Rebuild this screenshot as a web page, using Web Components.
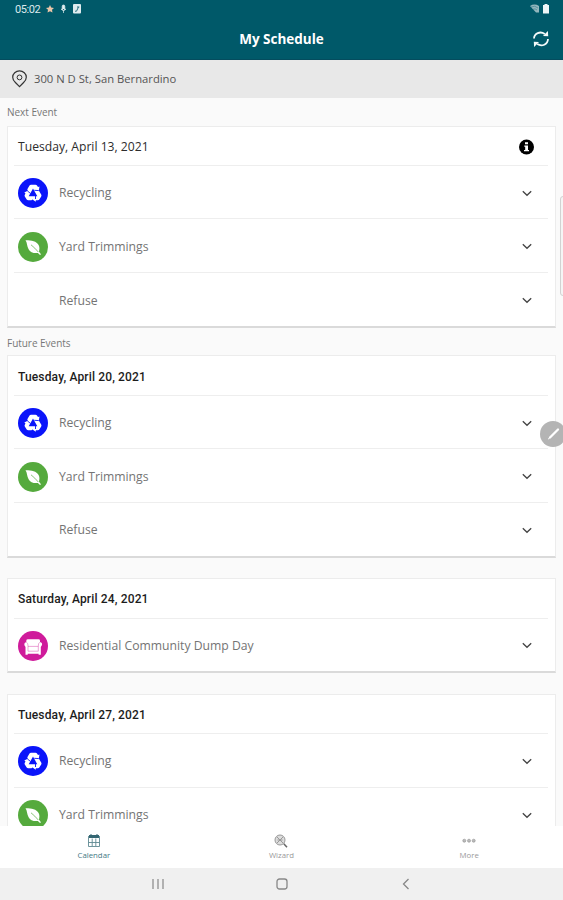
<!DOCTYPE html>
<html lang="en"><head><meta charset="utf-8"><title>My Schedule</title>
<style>html,body{margin:0;height:100%;overflow:hidden;background:#fafafa}</style></head>
<body><schedule-app></schedule-app>
<script>
const glyphs = {
  recycle: `<svg viewBox="0 0 30 30"><circle cx="15" cy="15" r="15" fill="#0a14fa"/><path d="M11.500 7.500Q12 6.700 13 6.700H17.500Q18.500 6.700 19 7.500L20 9 21.500 8.500 20.800 12.600 23.300 16.700Q23.700 17.500 23.200 18.400L21.300 21.500Q20.800 22.300 19.800 22.300H17.800V23.800L14.500 21.500 13.500 22.300H10.200Q9.200 22.300 8.700 21.500L6.800 18.400Q6.300 17.500 6.800 16.700L7.500 15.500 6.300 14.600 9.700 12.800 9.300 11.200Z" fill="#fff"/><path d="M15 10.500 19.300 18.300H10.700Z" fill="#0a14fa"/><path d="M16.300 12.300 20.800 12.600M17.500 18V21M12.500 15.500 9.300 12.800" stroke="#0a14fa" stroke-width=".9"/></svg>`,
  leaf: `<svg viewBox="0 0 30 30"><circle cx="15" cy="15" r="15" fill="#55aa3d"/><path d="M7.500 8.300C13 8.200 18.500 9.200 20.600 13c1.300 2.400.8 4.600.4 6.700l2 2.600-1 .8-2.100-2.100c-3.900.5-7.700-.5-9.300-3.800C8.900 14.300 9.300 11 7.500 8.300Z" fill="#fff"/><path d="M13 12.800Q17 16 20.300 20" fill="none" stroke="#55aa3d" stroke-width=".7"/></svg>`,
  chair: `<svg viewBox="0 0 30 30"><circle cx="15" cy="15" r="15" fill="#cf1b9b"/><path d="M8.300 11V9.700Q8.300 8.300 10 8.300H20.500Q22 8.300 22 9.700V11Q24.500 11.500 24 14L22.800 16V23.700H20.600V22.700H9.700V23.700H7.500V16L6.300 14Q6 11.500 8.300 11Z" fill="#fff"/><path d="M8.400 11.200Q10.300 12.200 10 15.400H20.300Q20 12.200 21.900 11.200M10 15.400V20.200H20.300V15.400" fill="none" stroke="#cf1b9b" stroke-width=".4"/></svg>`,
  none: ''
};
const define = (name, html) => {
  const t = document.createElement('template');
  t.innerHTML = html;
  customElements.define(name, class extends HTMLElement {
    constructor() { super(); this.attachShadow({mode:'open'}).append(t.content.cloneNode(true)); }
  });
};

define('status-bar', `<style>
:host{display:flex;align-items:center;height:18px;padding:0 13px 0 15px;color:#dce9ec;font:11px/18px Roboto,sans-serif}
.t{width:31px;letter-spacing:-.4px;padding-top:1px}svg{display:block}.sp{flex:1}
</style><span class="t">05:02</span>
<svg width="37" height="10" viewBox="0 0 37 10"><path d="m4 1 1.2 2.500L8 3.900 6 5.800l.5 2.700L4 7.300 1.500 8.500 2 5.800 0 3.900l2.800-.4Z" fill="#e9c5a8"/><path d="M17.500 1a1.300 1.300 0 0 1 1.300 1.300V5a1.300 1.300 0 0 1-2.600 0V2.300A1.300 1.300 0 0 1 17.500 1ZM15 5q2.500 3 5 0M17.500 6.500V9" fill="#e4eff1" stroke="#e4eff1" stroke-width=".7"/><rect x="27" y="0" width="8" height="9.500" rx="1" fill="#dfecef"/><path d="M29 7.200h1.500L32.500 3M31 3h2.300" stroke="#2b7180" fill="none"/></svg>
<span class="sp"></span>
<svg width="21" height="10" viewBox="0 0 21 10"><path d="M1 2Q5.500-.8 10 2V8.500L7 8.500Z" fill="#93b7be"/><path d="M2 3Q6 1 9 4M4 5.300Q6 4 8 6" fill="none" stroke="#005969" stroke-width=".4"/><path d="M14 1H15.500V0h3V1H20V9.500H14Z" fill="#eef6f7"/></svg>`);

define('title-bar', `<style>
:host{display:grid;grid-template-columns:44px 1fr 44px;align-items:center;height:42px;color:#fff;font:700 13.500px/42px "Open Sans",sans-serif;text-align:center;box-sizing:border-box;border-bottom:1px solid #044c5e}
svg{display:block;margin:0 auto}</style><span></span><span><slot></slot></span>
<svg width="18" height="18" viewBox="0 0 18 18" fill="none" stroke="#f4fafa" stroke-width="1.800"><path d="M2 8.500C2.300 3.500 8 .8 12.800 3.900M16 9C15.700 14.500 10 17 5.200 14.100"/><path d="M11 6 16.200 6.300 15.900 1ZM7 12 1.800 11.700 2.100 17Z" fill="#f4fafa" stroke="none"/></svg>`);

define('address-bar', `<style>
:host{display:flex;align-items:center;box-sizing:border-box;height:38px;padding:0 12px 0;gap:7px;background:#e8e8e8;color:#555;font:11.250px/36px "Open Sans",sans-serif}
</style><svg width="15" height="18" viewBox="0 0 15 18" fill="none" stroke="#333"><path d="M7.500 16.700 3.400 12.500Q.7 10.100.7 7.300A6.700 6.300 0 0 1 14.300 7.300Q14.300 10.100 11.600 12.500Z" stroke-width="1.200"/><circle cx="7.500" cy="7.400" r="2.400"/></svg><span><slot></slot></span>`);

define('section-label', `<style>:host{display:block;height:27.500px;padding-left:7px;font:10px/29px "Open Sans",sans-serif;letter-spacing:-.03px;color:#777}</style><slot></slot>`);

define('event-card', `<style>
:host{display:block;box-sizing:border-box;margin:0 7px 0 7px;padding:0 7px 0 6px;background:#fff;border:1px solid #ececec;border-bottom:2px solid #dadada}
header{display:flex;justify-content:space-between;align-items:center;height:38.300px;padding:2px 14px 0 4px;box-sizing:border-box;color:#2d2d2d;font:12.150px/36px "Open Sans",sans-serif}
:host([future]) header{font:500 12px/36px Roboto,sans-serif;letter-spacing:.15px;color:#1c1c1c}
:host([future]) svg{display:none}
</style><header><slot name="date"></slot><svg width="15" height="16" viewBox="0 0 15 16"><circle cx="7.500" cy="8" r="7.500" fill="#000"/><path d="M6 3.200H9V5.300H6ZM5.300 6.500H9V11H10V12.300H5V11H6.200V7.800H5.300Z" fill="#fff"/></svg></header><slot></slot>`);

customElements.define('event-row', class extends HTMLElement {
  connectedCallback() {
    this.attachShadow({mode:'open'}).innerHTML = `<style>
:host{display:grid;grid-template-columns:30px 1fr 10px;column-gap:11px;align-items:center;box-sizing:border-box;height:53.700px;padding:2px 16px 0 4px;border-top:1px solid #eee;color:#747474;font:12.200px/20px "Open Sans",sans-serif}
i{width:30px;height:30px}svg{display:block}i svg{width:30px;height:30px}</style>
<i>${glyphs[this.getAttribute('icon')]}</i><span><slot></slot></span>
<svg width="10" height="7" viewBox="0 0 10 7" fill="none" stroke="#444" stroke-width="1.300"><path d="M.8 1.200 5 5.300 9.200 1.200"/></svg>`;
  }
});

define('tab-bar', `<style>
:host{display:grid;grid-template-columns:repeat(3,1fr);height:42px;background:#fff;color:#999;font:7.800px/10px "Open Sans",sans-serif}
div{display:flex;flex-direction:column;align-items:center;padding-top:8px;gap:2px}.on{color:#457984}svg{display:block}
</style><div class="on"><svg width="14" height="14" viewBox="0 0 14 14"><path d="M2 1H12V4H2Z" fill="#356773"/><path d="M1.500 2V12.500H12.500V2M1.500 8.500H12.500M5.200 4.500V12M8.800 4.500V12" fill="none" stroke="#5f8992" stroke-width=".9"/><path d="M4 0V2M10 0V2" stroke="#356773"/></svg><span>Calendar</span></div>
<div><svg width="14" height="14" viewBox="0 0 14 14" fill="none" stroke="#999"><circle cx="6" cy="6" r="5" fill="#ddd"/><path d="M3 3 9 9M9 3 3 9M3.500 6H8.500"/><path d="M9.800 9.800 13 13.300" stroke="#666" stroke-width="1.500"/></svg><span>Wizard</span></div>
<div><svg width="14" height="14" viewBox="0 0 14 14" fill="#bbb" stroke="#999" stroke-width=".7"><circle cx="2.300" cy="6.700" r="1.500"/><circle cx="7" cy="6.700" r="1.500"/><circle cx="11.700" cy="6.700" r="1.500"/></svg><span>More</span></div>`);

define('system-nav', `<style>:host{display:flex;justify-content:center;align-items:center;gap:112px;height:32px;padding-top:0;background:#f0f0f0}svg{display:block}</style>
<svg width="12" height="12" viewBox="0 0 12 12" stroke="#888" stroke-width="1.200"><path d="M1 1V11M6 1V11M11 1V11"/></svg>
<svg width="12" height="12" viewBox="0 0 12 12" fill="none" stroke="#888" stroke-width="1.300"><rect x="1" y="1" width="10" height="10" rx="2.500"/></svg>
<svg width="12" height="12" viewBox="0 0 12 12" fill="none" stroke="#888" stroke-width="1.300"><path d="M8.500 1 3.500 6 8.500 11"/></svg>`);

define('floating-pen', `<style>:host{display:block;position:absolute;left:540px;top:421px;width:26px;height:26px;border-radius:50%;background:#b4b4b4}svg{display:block}</style>
<svg width="26" height="26" viewBox="0 0 26 26" stroke="#fff" stroke-linecap="round"><path d="M10 16.500 18 8.500" stroke-width="2.300"/><path d="M8.300 18 10 16.500" stroke-width="1"/></svg>`);
define('scroll-handle', `<style>:host{display:block;position:absolute;box-sizing:border-box;left:560px;top:196px;width:6px;height:100px;border:1px solid #d2d2d2;border-radius:3px;background:#f5f5f5}</style>`);

define('schedule-app', `<style>
:host{display:flex;flex-direction:column;position:relative;width:563px;height:900px;overflow:hidden;background:#fafafa}
.top{background:#005969}main{flex:1;min-height:0;overflow:hidden}
.gap{margin-top:20.500px}
.l2{line-height:30px}
</style>
<div class="top"><status-bar></status-bar><title-bar>My Schedule</title-bar></div>
<address-bar>300 N D St, San Bernardino</address-bar>
<main>
<section-label>Next Event</section-label>
<event-card><span slot="date">Tuesday, April 13, 2021</span><event-row icon="recycle">Recycling</event-row><event-row icon="leaf">Yard Trimmings</event-row><event-row icon="none">Refuse</event-row></event-card>
<section-label class="l2">Future Events</section-label>
<event-card future><span slot="date">Tuesday, April 20, 2021</span><event-row icon="recycle">Recycling</event-row><event-row icon="leaf">Yard Trimmings</event-row><event-row icon="none">Refuse</event-row></event-card>
<event-card future class="gap"><span slot="date">Saturday, April 24, 2021</span><event-row icon="chair">Residential Community Dump Day</event-row></event-card>
<event-card future class="gap"><span slot="date">Tuesday, April 27, 2021</span><event-row icon="recycle">Recycling</event-row><event-row icon="leaf">Yard Trimmings</event-row></event-card>
</main>
<tab-bar></tab-bar><system-nav></system-nav>
<floating-pen></floating-pen><scroll-handle></scroll-handle>`);
</script></body></html>
